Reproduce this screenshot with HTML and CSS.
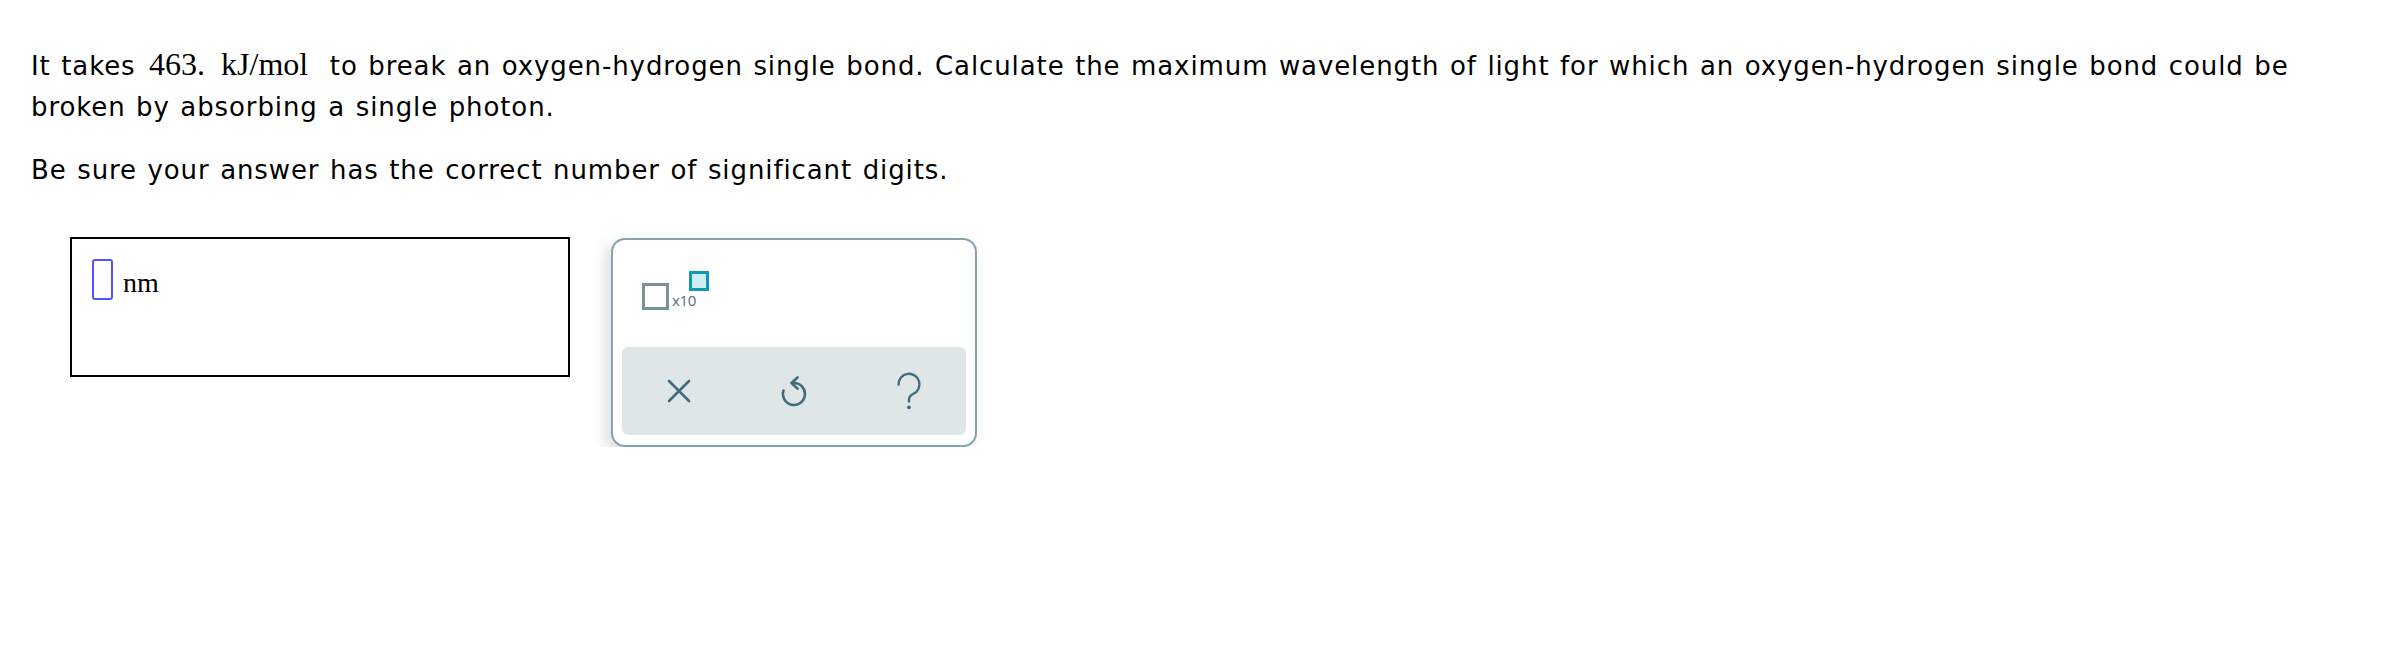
FILE: index.html
```html
<!DOCTYPE html>
<html lang="en">
<head>
<meta charset="utf-8">
<title>Question</title>
<link rel="stylesheet" href="styles.css">
</head>
<body>
<div class="page">
  <p class="q">It takes <span class="math">463.&nbsp; kJ/mol</span> to break an oxygen-hydrogen single bond. Calculate the maximum wavelength of light for which an oxygen-hydrogen single bond could be broken by absorbing a single photon.</p>
  <p class="q">Be sure your answer has the correct number of significant digits.</p>
  <div class="answer-row">
    <div class="answer-box">
      <span class="slot"></span>
      <span class="unit">nm</span>
    </div>
    <div class="keypad">
      <div class="keys-top">
        <div class="sci">
          <span class="sq"></span>
          <span class="x10">x10</span>
          <span class="sup"></span>
        </div>
      </div>
      <div class="actions">
        <div class="act">
          <svg width="24" height="24" viewBox="0 0 24 24"><path d="M2 2 L22 22 M22 2 L2 22" fill="none" stroke="#3f6d7b" stroke-width="2.6" stroke-linecap="round"/></svg>
        </div>
        <div class="act">
          <svg width="30" height="32" viewBox="0 0 30 32"><path d="M15 8 A11 11 0 1 1 4.5 15.5" fill="none" stroke="#3f6d7b" stroke-width="2.6" stroke-linecap="round"/><path d="M18.5 2.5 L12.5 8 L18.5 13.5" fill="none" stroke="#3f6d7b" stroke-width="2.6" stroke-linecap="round" stroke-linejoin="round"/></svg>
        </div>
        <div class="act">
          <svg width="26" height="38" viewBox="0 0 26 38"><path d="M2.5 12.5 A10.5 10.5 0 1 1 17 22 Q13 24 13 28 V29.5" fill="none" stroke="#3f6d7b" stroke-width="2.4" stroke-linecap="round"/><circle cx="13" cy="35.3" r="1.9" fill="#3f6d7b"/></svg>
        </div>
      </div>
    </div>
  </div>
</div>
</body>
</html>
```

FILE: styles.css
```css
html, body {
  margin: 0;
  padding: 0;
  background: #ffffff;
}

.page {
  padding: 46px 50px 0 31px;
  font-family: "DejaVu Sans", Verdana, sans-serif;
  font-size: 26px;
  letter-spacing: 0.9px;
  word-spacing: 1.4px;
  color: #000;
}

.q {
  margin: 0 0 22px 0;
  line-height: 41px;
}

.math {
  font-family: "Liberation Serif", "Times New Roman", serif;
  font-size: 32px;
  letter-spacing: 0;
  word-spacing: 0;
  line-height: 1;
  margin: 0 11px 0 3px;
}

.answer-row {
  display: flex;
  align-items: flex-start;
  gap: 41px;
  margin: 46px 0 0 39px;
  letter-spacing: 0;
  word-spacing: 0;
}

.answer-box {
  box-sizing: border-box;
  width: 500px;
  height: 140px;
  border: 2px solid #000;
  padding: 20px 0 0 20px;
  display: flex;
  align-items: flex-start;
}

.slot {
  box-sizing: border-box;
  width: 21px;
  height: 41px;
  border: 2px solid #5252ff;
  border-radius: 3px;
}

.unit {
  font-family: "Liberation Serif", "Times New Roman", serif;
  font-size: 28px;
  line-height: 28px;
  margin: 10px 0 0 10px;
}

.keypad {
  box-sizing: border-box;
  width: 366px;
  height: 209px;
  margin-top: 1px;
  border: 2px solid #87a2a9;
  border-radius: 14px;
  background: #fff;
  box-shadow: -6px 6px 14px rgba(40, 60, 70, 0.16);
  padding: 0 9px 10px 9px;
  display: flex;
  flex-direction: column;
}

.keys-top {
  height: 107px;
  box-sizing: border-box;
  padding: 31px 0 0 20px;
}

.sci {
  display: flex;
  align-items: flex-end;
  height: 39px;
}

.sq {
  box-sizing: border-box;
  width: 27px;
  height: 27px;
  border: 3px solid #74939b;
}

.x10 {
  font-family: "Open Sans", "Lato", sans-serif;
  font-size: 15px;
  line-height: 15px;
  color: #4d6f79;
  margin: 0 0 2px 3px;
  letter-spacing: -0.3px;
}

.sup {
  box-sizing: border-box;
  width: 20px;
  height: 20px;
  border: 3px solid #0e9ab4;
  background: #cdeef3;
  align-self: flex-start;
  margin-left: -7px;
}

.actions {
  flex: 1;
  background: #dfe6e8;
  border-radius: 6px;
  display: grid;
  grid-template-columns: 1fr 1fr 1fr;
  align-items: center;
  justify-items: center;
}

.act {
  display: flex;
  align-items: center;
  justify-content: center;
}
```
